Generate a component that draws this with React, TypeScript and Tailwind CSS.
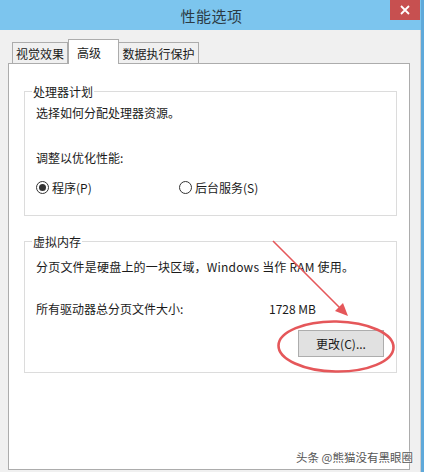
import React from "react";

const font = { fontFamily: '"Noto Sans CJK SC", "Noto Sans", sans-serif' };

function Radio({ checked, label }: { checked: boolean; label: string }) {
  return (
    <div className="flex items-center gap-[3px]">
      <span className="w-[13px] h-[13px] rounded-full border border-[#333] bg-white flex items-center justify-center">
        {checked && <span className="w-[7px] h-[7px] rounded-full bg-[#333]" />}
      </span>
      <span>{label}</span>
    </div>
  );
}

export default function App() {
  return (
    <div
      className="relative w-[424px] h-[472px] overflow-hidden bg-[#f0f0f0] flex flex-col border-r-[3px] border-r-[#5fa9da] text-[12px] leading-[17px] text-[#1a1a1a]"
      style={font}
    >
      {/* Title bar */}
      <div className="relative h-[30px] shrink-0 bg-[#7cc5ee] flex items-center justify-center">
        <span className="text-[15px] text-[#2b3a44] tracking-[0.5px] pl-[2px]">性能选项</span>
        <div className="absolute right-[1px] top-0 w-[30px] h-[20px] bg-[#c75050] flex items-center justify-center">
          <svg width="10" height="10" viewBox="0 0 10 10">
            <path d="M1 1 L9 9 M9 1 L1 9" stroke="#fff" strokeWidth="1.8" />
          </svg>
        </div>
      </div>

      {/* Body */}
      <div className="flex-1 flex flex-col pl-[8px] pr-[10px] pt-[9px] pb-[2px] border-r border-r-[#cfcfcf]">
        {/* Tabs */}
        <div className="flex items-end pl-[4px] h-[24px] shrink-0 relative z-10">
          <div className="w-[56px] h-[21px] border border-b-0 border-[#acacac] bg-[#f0f0f0] flex items-center justify-center">
            视觉效果
          </div>
          <div className="w-[51px] h-[25px] -mb-px border border-b-0 border-[#acacac] bg-white flex items-start pt-[4px] pl-[8px]">
            高级
          </div>
          <div className="w-[80px] h-[21px] border border-b-0 border-l-0 border-[#acacac] bg-[#f0f0f0] flex items-center justify-center">
            数据执行保护
          </div>
        </div>

        {/* Panel */}
        <div className="flex-1 bg-white border border-[#acacac] pl-[15px] pr-[12px] pt-[19px]">
          <fieldset className="border border-[#dcdcdc] px-0 pt-0 pb-[19px] m-0">
            <legend className="ml-[7px] px-[1px] leading-[17px]">处理器计划</legend>
            <div className="pl-[11px]">
              <div className="mt-[4px]">选择如何分配处理器资源。</div>
              <div className="mt-[28px]">调整以优化性能:</div>
              <div className="mt-[13px] flex">
                <div className="w-[143px]">
                  <Radio checked label="程序(P)" />
                </div>
                <Radio checked={false} label="后台服务(S)" />
              </div>
            </div>
          </fieldset>

          <fieldset className="mt-[17px] border border-[#dcdcdc] px-0 pt-0 pb-[15px] m-0">
            <legend className="ml-[7px] px-[1px] leading-[17px]">虚拟内存</legend>
            <div className="pl-[11px] pr-[12px]">
              <div className="mt-[8px] tracking-[0.2px]">分页文件是硬盘上的一块区域，Windows 当作 RAM 使用。</div>
              <div className="mt-[25px] flex">
                <span className="w-[233px]">所有驱动器总分页文件大小:</span>
                <span>1728 MB</span>
              </div>
              <div className="mt-[13px] flex justify-end">
                <div className="w-[86px] h-[27px] bg-[#e1e1e1] border border-[#adadad] flex items-center justify-center">
                  更改(C)...
                </div>
              </div>
            </div>
          </fieldset>
        </div>
      </div>

      {/* Red annotation overlay */}
      <svg className="absolute left-0 top-0 pointer-events-none" width="424" height="472" viewBox="0 0 424 472">
        <line x1="273" y1="241" x2="342" y2="310" stroke="#e5575a" strokeWidth="1.6" />
        <polygon points="348,316 335,311 343,303" fill="#e5575a" />
        <ellipse cx="336" cy="346.5" rx="57.5" ry="25" fill="none" stroke="#e5575a" strokeWidth="2.6" transform="rotate(1 336 346.5)" />
      </svg>

      {/* Watermark */}
      <div
        className="absolute right-[8px] top-[448px] text-[11.5px] leading-[18px] text-[#555] whitespace-nowrap"
        style={{ textShadow: "0 0 2px #fff, 0 0 2px #fff" }}
      >
        头条 @熊猫没有黑眼圈
      </div>
    </div>
  );
}
